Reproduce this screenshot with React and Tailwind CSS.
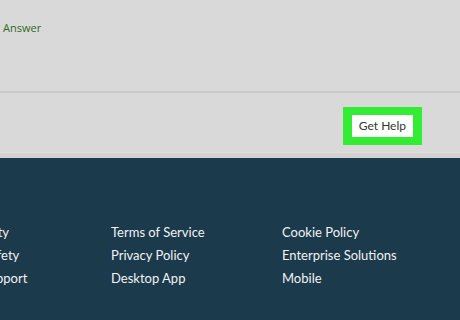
export default function App() {
  const cols = [
    ["Accessibility", "Trust & Safety", "Help & Support"],
    ["Terms of Service", "Privacy Policy", "Desktop App"],
    ["Cookie Policy", "Enterprise Solutions", "Mobile"],
  ];
  return (
    <div className="w-[460px] h-[320px] overflow-hidden flex flex-col bg-[#d9d9d9]" style={{ fontFamily: "Lato, 'Open Sans', sans-serif" }}>
      <div className="h-[91px] pl-[3px] pt-[14px]">
        <span className="text-[11px] text-[#2f6a22]" style={{ fontFamily: "'Open Sans', sans-serif" }}>Answer</span>
      </div>
      <div className="h-[2px] bg-[#cacaca]" />
      <div className="h-[59px] flex items-start justify-end pr-[38px] pt-[14px]">
        <div className="bg-[#35ec35] px-[9px] py-[8px]">
          <div className="bg-white px-[7px] h-[22px] flex items-center text-[12px] text-[#2c3a2c]">Get Help</div>
        </div>
      </div>
      <div className="h-[6px] bg-[#d3d3d3] border-t border-[#e2ddd6]" />
      <div className="flex-1 bg-[#1b3a4b] pt-[65px]">
        <div className="flex ml-[-61px]">
          {cols.map((c, i) => (
            <div key={i} className={i === 0 ? "w-[172px] flex flex-col gap-[5px]" : "w-[171px] flex flex-col gap-[5px]"}>
              {c.map((t) => (
                <div key={t} className="text-[13px] leading-[18px] text-[#f2f2f2]">{t}</div>
              ))}
            </div>
          ))}
        </div>
      </div>
    </div>
  );
}
